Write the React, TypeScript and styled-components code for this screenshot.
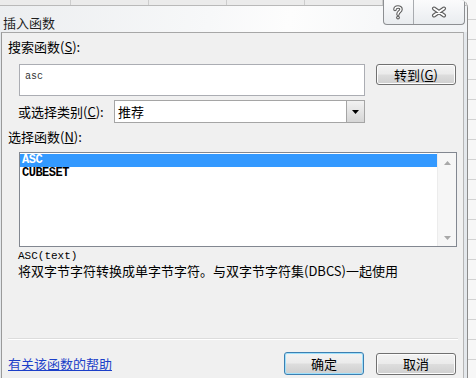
import styled, { createGlobalStyle } from "styled-components"

const GlobalStyle = createGlobalStyle`
  html, body {
    margin: 0;
    padding: 0;
  }
  body {
    width: 476px;
    height: 378px;
    overflow: hidden;
    background: #f7f7f7 repeating-linear-gradient(to bottom, transparent 0 19px, #d2d2d2 19px 20px);
    font-family: "Noto Sans CJK SC", "Liberation Sans", sans-serif;
    color: #000;
  }
`

const Window = styled.div`
  width: 468px;
  height: 378px;
  display: flex;
  flex-direction: column;
  background: #e4e8ec;
  border-right: 1px solid #8c8c8c;
  border-top-right-radius: 8px;
  overflow: hidden;
  box-sizing: border-box;
`

const TitleBar = styled.div`
  position: relative;
  height: 32px;
  flex: none;
  background: linear-gradient(100deg, #eceef0 0%, #f7f8f9 45%, #fdfdfd 62%, #f1f3f5 100%);
`

const GridStrip = styled.div`
  display: flex;
  height: 5px;
  background: #ebebeb;
  border-bottom: 1px solid #b9b9b9;
`

const GridCell = styled.div<{ w: number }>`
  flex: none;
  width: ${({ w }) => w}px;
  border-right: 1px solid #cdcdcd;
  box-sizing: border-box;
`

const Title = styled.div`
  display: flex;
  align-items: center;
  height: 20px;
  padding: 6px 0 0 3px;
  font-size: 13px;
  color: #1e1e1e;
`

const CaptionButtons = styled.div`
  position: absolute;
  left: 383px;
  top: 0;
  width: 82px;
  height: 25px;
  display: flex;
  box-sizing: border-box;
  border: 1px solid #8d8f92;
  border-top: none;
  border-radius: 0 0 4px 4px;
  background: linear-gradient(#fbfbfc, #e9ecef);
`

const CaptionButton = styled.div<{ w: number }>`
  width: ${({ w }) => w}px;
  display: flex;
  align-items: center;
  justify-content: center;
  & + & {
    border-left: 1px solid #a8abaf;
  }
`

const Panel = styled.div`
  flex: 1;
  width: 463px;
  margin-left: 1px;
  display: flex;
  flex-direction: column;
  padding: 0 7px 0 6px;
  box-sizing: border-box;
  background: #f0f0f0;
  border-top: 1px solid #a7a7a7;
  border-left: 1px solid #9a9a9a;
  border-right: 1px solid #b6b6b6;
`

const Heading = styled.div<{ top: number }>`
  margin-top: ${({ top }) => top}px;
  font-size: 13px;
  line-height: 16px;
  height: 16px;
  white-space: nowrap;
`

const Key = styled.span`
  text-decoration: underline;
`

const SearchRow = styled.div`
  display: flex;
  align-items: flex-start;
  gap: 11px;
  margin-top: 9px;
  padding-left: 11px;
`

const SearchBox = styled.div`
  width: 346px;
  height: 32px;
  box-sizing: border-box;
  padding: 6px 0 0 5px;
  background: #fff;
  border: 1px solid #abadb3;
  font-family: "Liberation Mono", monospace;
  font-size: 10px;
  color: #333;
`

const Button = styled.div<{ focused?: boolean }>`
  flex: none;
  width: 80px;
  height: ${({ focused }) => (focused ? 23 : 22)}px;
  box-sizing: border-box;
  display: flex;
  align-items: center;
  justify-content: center;
  font-size: 13px;
  border-radius: 3px;
  border: 1px solid ${({ focused }) => (focused ? "#3c7fb1" : "#707070")};
  background: linear-gradient(#f3f3f3 0%, #ebebeb 48%, #dddddd 52%, #cfcfcf 100%);
  box-shadow: inset 0 0 0 1px ${({ focused }) => (focused ? "#9fe0fb" : "#fcfcfc")};
`

const GoButton = styled(Button)`
  height: 21px;
`

const CategoryRow = styled.div`
  display: flex;
  align-items: center;
  margin-top: 4px;
  padding-left: 10px;
`

const CategoryLabel = styled.div`
  width: 96px;
  font-size: 13px;
  white-space: nowrap;
`

const Select = styled.div`
  width: 251px;
  height: 23px;
  display: flex;
  box-sizing: border-box;
  background: #fff;
  border: 1px solid #a5a5a5;
`

const SelectValue = styled.div`
  flex: 1;
  padding-left: 3px;
  font-size: 13px;
  line-height: 21px;
`

const DropButton = styled.div`
  width: 17px;
  display: flex;
  align-items: center;
  justify-content: center;
  border-left: 1px solid #a5a5a5;
  background: linear-gradient(#f2f2f2, #d6d6d6);
`

const ListBox = styled.div`
  display: flex;
  width: 438px;
  height: 95px;
  margin: 7px 0 0 11px;
  box-sizing: border-box;
  background: #fff;
  border: 1px solid #828790;
`

const Items = styled.div`
  flex: 1;
  padding-top: 1px;
`

const Item = styled.div<{ selected?: boolean }>`
  height: 13px;
  line-height: 13px;
  padding-left: 2px;
  font-family: "Liberation Mono", monospace;
  font-weight: bold;
  font-size: 12px;
  letter-spacing: -0.5px;
  color: ${({ selected }) => (selected ? "#fff" : "#000")};
  background: ${({ selected }) => (selected ? "#3399ff" : "transparent")};
`

const ScrollBar = styled.div`
  width: 19px;
  display: flex;
  flex-direction: column;
  justify-content: space-between;
  align-items: center;
  padding: 8px 0 6px;
  box-sizing: border-box;
  background: #f6f6f6;
  border-left: 1px solid #ececec;
`

const Signature = styled.div`
  margin-top: 2px;
  padding-left: 10px;
  font-family: "Liberation Mono", monospace;
  font-size: 11px;
  line-height: 14px;
`

const Description = styled.div`
  padding-left: 10px;
  font-size: 13px;
  line-height: 16px;
  white-space: nowrap;
`

const Separator = styled.div`
  margin: 59px -2px 0 0;
  border-top: 1px solid #dcdcdc;
  border-bottom: 1px solid #ffffff;
`

const Footer = styled.div`
  display: flex;
  align-items: center;
  gap: 12px;
  margin-top: 12px;
`

const HelpLink = styled.a`
  flex: 1;
  font-size: 13px;
  color: #1c3fc8;
  text-decoration: underline;
  cursor: pointer;
`

function HelpIcon() {
  const d = "M3 4.5 C3 1.2 9 1.2 9 4.2 C9 6.6 6 6.6 6 9.2"
  return (
    <svg width="12" height="15" viewBox="0 0 12 15">
      <path d={d} fill="none" stroke="#5d5d5d" strokeWidth="3.6" strokeLinecap="round" />
      <circle cx="6" cy="12.6" r="1.9" fill="#5d5d5d" />
      <path d={d} fill="none" stroke="#fff" strokeWidth="1.4" strokeLinecap="round" />
      <circle cx="6" cy="12.6" r="0.8" fill="#fff" />
    </svg>
  )
}

function CloseIcon() {
  const d = "M3 2.5 L13 9.5 M13 2.5 L3 9.5"
  return (
    <svg width="16" height="12" viewBox="0 0 16 12">
      <path d={d} stroke="#5d5d5d" strokeWidth="4" strokeLinecap="round" />
      <path d={d} stroke="#fff" strokeWidth="1.8" strokeLinecap="round" />
    </svg>
  )
}

function Arrow({ up, color }: { up?: boolean; color: string }) {
  return (
    <svg width="7" height="4" viewBox="0 0 7 4">
      <path d={up ? "M0 4 L3.5 0 L7 4 Z" : "M0 0 L7 0 L3.5 4 Z"} fill={color} />
    </svg>
  )
}

export default function App() {
  return (
    <>
      <GlobalStyle />
      <Window>
        <TitleBar>
          <GridStrip>
            <GridCell w={71} />
            <GridCell w={78} />
            <GridCell w={78} />
            <GridCell w={78} />
            <GridCell w={78} />
            <GridCell w={78} />
          </GridStrip>
          <Title>插入函数</Title>
          <CaptionButtons>
            <CaptionButton w={29}>
              <HelpIcon />
            </CaptionButton>
            <CaptionButton w={51}>
              <CloseIcon />
            </CaptionButton>
          </CaptionButtons>
        </TitleBar>
        <Panel>
          <Heading top={6}>
            搜索函数(<Key>S</Key>):
          </Heading>
          <SearchRow>
            <SearchBox>asc</SearchBox>
            <GoButton>
              转到(<Key>G</Key>)
            </GoButton>
          </SearchRow>
          <CategoryRow>
            <CategoryLabel>
              或选择类别(<Key>C</Key>):
            </CategoryLabel>
            <Select>
              <SelectValue>推荐</SelectValue>
              <DropButton>
                <Arrow color="#000" />
              </DropButton>
            </Select>
          </CategoryRow>
          <Heading top={6}>
            选择函数(<Key>N</Key>):
          </Heading>
          <ListBox>
            <Items>
              <Item selected>ASC</Item>
              <Item>CUBESET</Item>
            </Items>
            <ScrollBar>
              <Arrow up color="#a8a8a8" />
              <Arrow color="#a8a8a8" />
            </ScrollBar>
          </ListBox>
          <Signature>ASC(text)</Signature>
          <Description>将双字节字符转换成单字节字符。与双字节字符集(DBCS)一起使用</Description>
          <Separator />
          <Footer>
            <HelpLink>有关该函数的帮助</HelpLink>
            <Button focused>确定</Button>
            <Button>取消</Button>
          </Footer>
        </Panel>
      </Window>
    </>
  )
}
